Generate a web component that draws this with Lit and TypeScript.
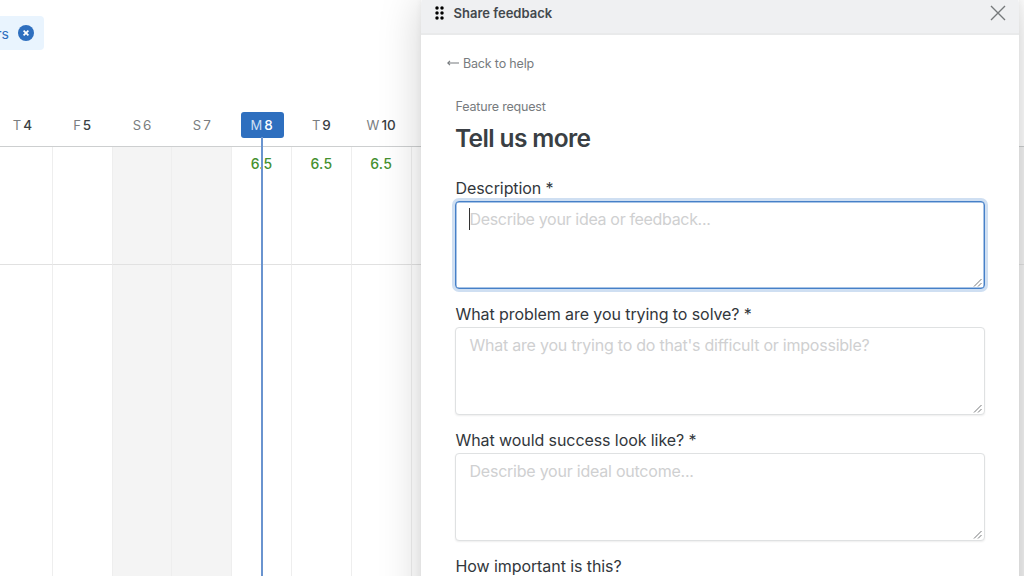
import { LitElement, html, css, svg } from "lit";
import { customElement, property } from "lit/decorators.js";
import { classMap } from "lit/directives/class-map.js";

interface Day {
  letter: string;
  date: number;
  weekend: boolean;
  today: boolean;
  hours: string;
}

const LETTERS = ["S", "M", "T", "W", "T", "F", "S"];
const DAYS: Day[] = Array.from({ length: 18 }, (_, i) => {
  const date = i + 4;
  const weekday = (date - 7 + 7) % 7;
  const weekend = weekday === 0 || weekday === 6;
  return {
    letter: LETTERS[weekday],
    date,
    weekend,
    today: date === 8,
    hours: date >= 8 && !weekend ? "6.5" : "",
  };
});
const LAST_LABELLED = 10;

@customElement("schedule-grid")
export class ScheduleGrid extends LitElement {
  static styles = css`
    :host { display: flex; flex-direction: column; height: 576px; width: 1024px; overflow: hidden; background: #fff; }
    .toolbar { height: 96px; padding-top: 16px; box-sizing: border-box; flex: none; }
    .chip {
      display: flex; align-items: center; justify-content: flex-end; gap: 9px;
      width: 44px; height: 34px; padding-right: 10px; box-sizing: border-box;
      background: #e9f4fe; border-radius: 0 4px 4px 0;
      color: #2e6fbf; font-size: 14px;
    }
    .chip svg { flex: none; }
    .days { display: grid; grid-template-columns: repeat(18, 59.8px); margin-left: -7px; width: max-content; }
    .head { height: 51px; border-bottom: 1px solid #cdcfd0; box-sizing: border-box; padding-top: 16px; flex: none; }
    .day { display: flex; justify-content: center; }
    .label {
      display: flex; align-items: center; justify-content: center; gap: 2px;
      height: 26px; width: 43px; font-size: 13px; color: #7a7d80; box-sizing: border-box; padding-right: 1px;
    }
    .num { font-weight: 500; font-size: 13.5px; color: #3a3f44; }
    .weekend .num { font-weight: 400; color: #7a7d80; }
    .today .label { background: #2e6fbf; border-radius: 3px; color: #cfe0f4; }
    .today .num { color: #fff; }
    .body { flex: 1; grid-template-rows: 117.5px 1fr; }
    .cell {
      box-sizing: border-box; border-right: 1px solid #eeeeee; border-bottom: 1px solid #e1e1e1;
      padding-top: 8px; text-align: center; line-height: 18px; font-size: 14px; font-weight: 450; color: #45902f;
      position: relative; letter-spacing: 0.25px;
    }
    .cell.open { border-bottom: 0; }
    .cell.weekend { background: #f4f4f4; }
    .marker { position: absolute; left: 29.3px; top: -10px; bottom: -1px; width: 1.5px; background: #6a94cf; }
  `;

  private cells(row: number) {
    return DAYS.map((d) => html`
      <div class=${classMap({ cell: true, weekend: d.weekend, open: row === 1 })}>
        ${row === 0 && d.date <= LAST_LABELLED ? d.hours : ""}${d.today ? html`<i class="marker"></i>` : ""}
      </div>`);
  }

  render() {
    return html`
      <div class="toolbar">
        <div class="chip">
          <span>rs</span>
          <svg width="16" height="16" viewBox="0 0 16 16">
            <circle cx="8" cy="8" r="8" fill="#2e6fbf" />
            <path d="M5.6 5.6l4.8 4.8M10.4 5.6l-4.8 4.8" stroke="#fff" stroke-width="1.7" />
          </svg>
        </div>
      </div>
      <div class="days head">
        ${DAYS.map((d) => html`
          <div class=${classMap({ day: true, weekend: d.weekend, today: d.today })}>
            ${d.date <= LAST_LABELLED
              ? html`<div class="label"><span>${d.letter}</span><span class="num">${d.date}</span></div>`
              : ""}
          </div>`)}
      </div>
      <div class="days body">${this.cells(0)}${this.cells(1)}</div>
    `;
  }
}

@customElement("feedback-field")
export class FeedbackField extends LitElement {
  @property() label = "";
  @property() placeholder = "";
  @property({ type: Boolean }) focused = false;

  static styles = css`
    :host { display: block; height: 126px; }
    .label { font-size: 16px; line-height: 26px; letter-spacing: -0.08px; color: #32373c; white-space: nowrap; }
    .box {
      display: flex; box-sizing: border-box; height: 88px; width: 530px; padding: 5px 1px 0 13px;
      margin-left: -0.5px;
      border: 1px solid #dfe1e2; border-radius: 4px; background: #fff;
      box-shadow: 0 1px 2px rgba(0, 0, 0, 0.07);
    }
    .box.focused { border-color: #4680c8; box-shadow: 0 0 0 3px #cfdff2, inset 0 0 0 0.5px #5389cd; }
    .hint { flex: 1; padding-left: 0.5px; font-size: 16px; line-height: 25px; letter-spacing: -0.23px; color: #cfd0d1; white-space: nowrap; }
    .focused .hint { letter-spacing: -0.33px; }
    .caret { width: 1px; height: 22px; margin: 1px -1px 0 0; background: #333; }
    .grip { align-self: flex-end; margin: 0 0 1px; }
  `;

  render() {
    return html`
      <div class="label">${this.label}</div>
      ${this.placeholder ? html`
        <div class=${classMap({ box: true, focused: this.focused })}>
          ${this.focused ? html`<span class="caret"></span>` : ""}
          <span class="hint">${this.placeholder}</span>
          <svg class="grip" width="10" height="9" viewBox="0 0 10 9">
            <path d="M1 8.5L8.5 1M5 8.5L8.5 5" stroke="#76797b" stroke-width="1" fill="none" />
          </svg>
        </div>` : ""}
    `;
  }
}

@customElement("app-root")
export class AppRoot extends LitElement {
  static styles = css`
    :host {
      display: block; position: relative; width: 1024px; height: 576px; overflow: hidden;
      font-family: Inter, "Liberation Sans", sans-serif;
    }
    .panel {
      position: absolute; left: 421px; top: -8px; width: 598px; height: 640px;
      background: #fff; border-radius: 12px 12px 0 0; overflow: hidden;
    }
    .shade {
      position: absolute; left: 421px; top: -8px; width: 598px; height: 640px; border-radius: 12px;
      box-shadow: 0 2px 6px rgba(0, 0, 0, 0.06), 0 8px 44px rgba(0, 0, 0, 0.18);
    }
    .bar {
      display: flex; align-items: center; height: 43px; padding: 0 13px 0 14px; box-sizing: border-box;
      background: #eff0f2; border-bottom: 2px solid #e9eaeb;
    }
    .title { flex: 1; margin: 1px 0 0 9.5px; font-size: 13px; font-weight: 600; color: #43484d; }
    .handle { margin-top: 1px; }
    .close { margin-top: 1px; }
    .back {
      display: flex; align-items: center; gap: 4px; margin: 19px 0 0 26px; height: 18px;
      font-size: 12.5px; letter-spacing: -0.17px; color: #777b7e;
    }
    .form { padding-left: 34.5px; }
    .kind { margin-top: 26px; font-size: 12.5px; line-height: 18px; letter-spacing: -0.18px; color: #777b7e; }
    h1 { margin: 6px 0 21px -0.5px; font-size: 24.5px; line-height: 32px; font-weight: 600; letter-spacing: -0.64px; color: #3a3f44; }
  `;

  render() {
    const dots = [0, 1, 2].flatMap((r) => [0, 1].map((c) =>
      svg`<circle cx=${2 + c * 5} cy=${2 + r * 5} r="1.75" fill="#000" />`));
    return html`
      <schedule-grid></schedule-grid>
      <div class="shade"></div>
      <div class="panel">
        <div class="bar">
          <svg class="handle" width="9" height="14" viewBox="0 0 9 14">${dots}</svg>
          <div class="title">Share feedback</div>
          <svg class="close" width="16" height="16" viewBox="0 0 16 16">
            <path d="M1 1l14 14M15 1L1 15" stroke="#76797b" stroke-width="1.4" fill="none" />
          </svg>
        </div>
        <div class="back">
          <svg width="12" height="8" viewBox="0 0 12 8">
            <path d="M0.5 4H12M3 1.8L0.7 4L3 6.2" stroke="#777b7e" stroke-width="1.1" fill="none" />
          </svg>
          <span>Back to help</span>
        </div>
        <div class="form">
          <div class="kind">Feature request</div>
          <h1>Tell us more</h1>
          <feedback-field focused label="Description *" placeholder="Describe your idea or feedback..."></feedback-field>
          <feedback-field label="What problem are you trying to solve? *" placeholder="What are you trying to do that's difficult or impossible?"></feedback-field>
          <feedback-field label="What would success look like? *" placeholder="Describe your ideal outcome..."></feedback-field>
          <feedback-field label="How important is this?"></feedback-field>
        </div>
      </div>
    `;
  }
}
